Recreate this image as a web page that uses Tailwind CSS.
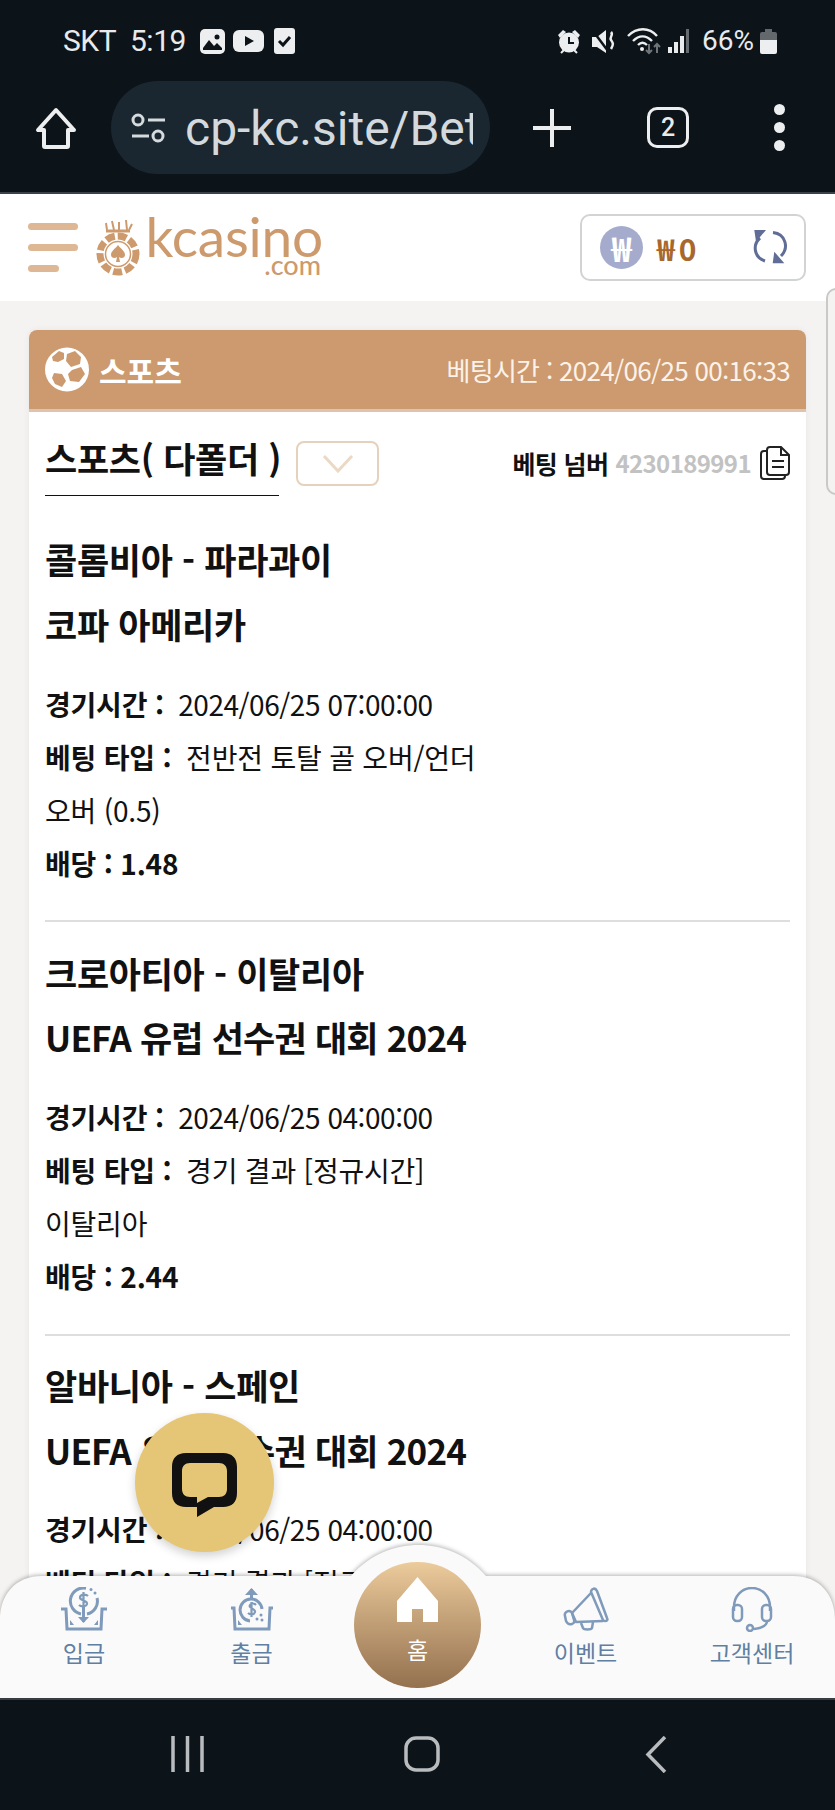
<!DOCTYPE html>
<html lang="ko">
<head>
<meta charset="utf-8">
<script src="https://cdn.jsdelivr.net/npm/@tailwindcss/browser@4"></script>
</head>
<body class="bg-[#0c1319]">
<div class="relative w-[835px] h-[1810px] overflow-hidden flex flex-col font-['Noto_Sans_CJK_KR',sans-serif] text-[#111]">

  <!-- phone status + browser bar -->
  <div class="h-[194px] shrink-0 bg-[#0c1319] border-b-2 border-[#3a4148] flex flex-col font-['Roboto',sans-serif] text-[#e8eaeb]">
    <div class="h-[81px] flex items-start pt-[23px] pl-[63px] pr-[58px]">
      <span class="text-[30px] leading-[36px] w-[67px] tracking-[-0.5px]">SKT</span>
      <span class="text-[30px] leading-[36px] w-[70px] tracking-[-0.5px]">5:19</span>
      <div class="flex items-center gap-[8px] h-[36px]">
        <svg width="25" height="25" viewBox="0 0 25 25"><rect width="25" height="25" rx="5" fill="#eceeef"/><circle cx="17" cy="8" r="2.5" fill="#0c1319"/><path d="M3 19l6-8 5 6 3-3 5 5v2H3z" fill="#0c1319"/></svg>
        <svg width="31" height="22" viewBox="0 0 31 22"><rect width="31" height="22" rx="6" fill="#eceeef"/><path d="M12 6l9 5-9 5z" fill="#0c1319"/></svg>
        <svg width="21" height="26" viewBox="0 0 21 26" class="ml-[2px]"><rect width="21" height="26" rx="3" fill="#eceeef"/><path d="M5 13l4 4 7-8" fill="none" stroke="#0c1319" stroke-width="3"/></svg>
      </div>
      <div class="ml-auto flex items-center h-[36px]">
        <svg width="24" height="25" viewBox="0 0 24 25" fill="#eceeef"><circle cx="12" cy="13.5" r="10"/><path d="M1 6l5-5 3 2-6 6zM23 6l-5-5-3 2 6 6z"/><path d="M12 8v6h5" fill="none" stroke="#0c1319" stroke-width="2"/><path d="M4 24l3-3M20 24l-3-3" stroke="#eceeef" stroke-width="2"/></svg>
        <svg width="24" height="25" viewBox="0 0 24 25" class="ml-[11px]" fill="#eceeef"><path d="M0 8h5l9-7v23l-9-6H0z"/><path d="M1 2l15 20" stroke="#0c1319" stroke-width="2.5"/><path d="M19 3c3 3-2 5 0 8s3 4 0 9" fill="none" stroke="#eceeef" stroke-width="2.5"/></svg>
        <svg width="35" height="28" viewBox="0 0 35 28" class="ml-[11px]" fill="none"><path d="M1 9c9-9 21-9 29 0M6 14c6-6 13-6 19 0M11 18c3-3 6-3 9 0" stroke="#eceeef" stroke-width="2.4"/><circle cx="15" cy="22" r="2" fill="#eceeef"/><path d="M22 17v9M19 23l3 3 3-3M30 26v-9M27 20l3-3 3 3" stroke="#6f7478" stroke-width="2"/></svg>
        <svg width="22" height="25" viewBox="0 0 22 25" class="ml-[6px]"><rect x="0" y="18" width="4" height="6" fill="#e8eaeb"/><rect x="6" y="13" width="4" height="11" fill="#e8eaeb"/><rect x="12" y="7" width="4" height="17" fill="#e8eaeb"/><rect x="18" y="0" width="3" height="24" fill="#666b70"/></svg>
        <span class="text-[28px] leading-[36px] ml-[12px]">66%</span>
        <svg width="17" height="25" viewBox="0 0 17 25" class="ml-[6px]"><path d="M5 0h7v3h3a2 2 0 0 1 2 2v6H0V5a2 2 0 0 1 2-2h3z" fill="#63686c"/><path d="M0 11h17v12a2 2 0 0 1-2 2H2a2 2 0 0 1-2-2z" fill="#eceeef"/></svg>
      </div>
    </div>
    <div class="flex items-center h-[93px] pl-[35px]">
      <svg width="42" height="42" viewBox="0 0 42 42" fill="none" stroke="#eceeef" stroke-width="4" stroke-linejoin="round"><path d="M21 3L3 23h6v16a1 1 0 0 0 1 1h22a1 1 0 0 0 1-1V23h6z"/></svg>
      <div class="ml-[34px] w-[379px] h-[93px] rounded-full bg-[#1a2730] flex items-center pl-[20px] pr-[17px]">
        <svg width="35" height="30" viewBox="0 0 35 30" fill="none" stroke="#d5dadd" stroke-width="3" class="shrink-0"><circle cx="7" cy="7" r="5"/><path d="M17 7h17M1 23h17"/><circle cx="27" cy="23" r="5"/></svg>
        <div class="ml-[19px] overflow-hidden whitespace-nowrap text-[48px] leading-[56px] text-[#d3d9dc] pt-[3px]">cp-kc.site/Bet</div>
      </div>
      <svg width="38" height="38" viewBox="0 0 38 38" class="ml-[43px]" stroke="#eceeef" stroke-width="4"><path d="M19 0v38M0 19h38"/></svg>
      <div class="ml-[76px] w-[42px] h-[41px] rounded-[10px] border-[3.5px] border-[#eceeef] flex items-center justify-center text-[25px] font-medium leading-none">2</div>
      <div class="ml-[85px] flex flex-col gap-[7px]">
        <div class="w-[11px] h-[11px] rounded-full bg-[#eceeef]"></div>
        <div class="w-[11px] h-[11px] rounded-full bg-[#eceeef]"></div>
        <div class="w-[11px] h-[11px] rounded-full bg-[#eceeef]"></div>
      </div>
    </div>
  </div>

  <!-- site header -->
  <div class="h-[107px] shrink-0 bg-white flex items-center pl-[28px] pr-[29px]">
    <div class="flex flex-col gap-[14px] w-[50px]">
      <div class="h-[7px] w-[50px] rounded-full bg-[#deb794]"></div>
      <div class="h-[7px] w-[50px] rounded-full bg-[#deb794]"></div>
      <div class="h-[7px] w-[31px] rounded-full bg-[#deb794]"></div>
    </div>
    <svg width="46" height="56" viewBox="0 0 46 56" class="ml-[17px]">
      <path d="M11 3l1 7M17 1l2 9M24 2l0 8M31 0l1 10M37 4l-3 6" stroke="#cd9a6d" stroke-width="2" fill="none"/>
      <path d="M11 11h24" stroke="#cd9a6d" stroke-width="3"/>
      <circle cx="23" cy="34" r="18" fill="none" stroke="#cd9a6d" stroke-width="7" stroke-dasharray="9 3"/>
      <circle cx="23" cy="34" r="12.5" fill="#fff" stroke="#cd9a6d" stroke-width="1.5"/>
      <path d="M23 25c3 4 7 6 7 10 0 3-4 4-6 2l1 5h-4l1-5c-2 2-6 1-6-2 0-4 4-6 7-10z" fill="#cd9a6d"/>
    </svg>
    <div class="ml-[11px] w-[169px] -mt-[3px] flex flex-col items-end font-['Lato',sans-serif] text-[#cd9a6d]">
      <span class="block text-[55px] h-[38px] leading-[34px] -mr-[2px] tracking-[-0.2px] font-normal">kcasino</span>
      <span class="block text-[27px] h-[16px] leading-[16px] font-medium">.com</span>
    </div>
    <div class="ml-auto w-[226px] h-[67px] rounded-[10px] border-[2.5px] border-[#d2d3d3] flex items-center pl-[18px]">
      <div class="w-[43px] h-[43px] rounded-full bg-[#a5abcc] flex items-center justify-center text-white text-[34px] font-bold leading-none">₩</div>
      <span class="ml-[14px] w-[74px] text-[30px] font-bold text-[#a8682d] leading-none tracking-[4px]">₩0</span>
      <svg width="35" height="35" viewBox="0 0 35 35" class="ml-[22px]"><path d="M7 8C0 14 0 27 12 31M20 2.500C33 4 36 18 28 26" fill="none" stroke="#5f6d97" stroke-width="3"/><path d="M1.300 0H13L3 11.700zM31.300 33.300H19.700L21.300 21.700z" fill="#5f6d97"/></svg>
    </div>
  </div>

  <!-- content -->
  <div class="flex-1 min-h-0 overflow-hidden bg-[#f4f3f1] pt-[29px] px-[29px]">
    <div class="bg-white rounded-t-[8px] shadow-[0_0_6px_rgba(0,0,0,0.06)]">
      <div class="h-[82px] rounded-t-[8px] bg-[#cc9a6e] border-b-[3px] border-[#dcc4ae] flex items-center px-[16px] text-white">
        <svg width="44" height="45" viewBox="0 0 44 45">
          <circle cx="22" cy="22.500" r="22" fill="#fff"/>
          <path d="M22 7l8-3 6 6-1 7-9 3-5-6zM27 23l9-3 4 7-6 8-9-1-2-7zM9 26l8 1 4 7-4 6-7-3-3-6zM7 10l7-6 5 2v6l-6 3-5-1z" fill="#cc9a6e"/>
        </svg>
        <span class="ml-[10px] text-[30px] font-bold leading-none">스포츠</span>
        <span class="ml-auto text-[26px] leading-none tracking-[-0.7px] text-[#fbf2ea]">베팅시간 : 2024/06/25 00:16:33</span>
      </div>
      <div class="px-[16px]">
        <div class="flex items-start h-[84px]">
          <div class="w-[234px] h-[84px] border-b-[1.5px] border-[#111] whitespace-nowrap text-[35px] font-bold leading-[92px] tracking-[-0.3px]">스포츠( 다폴더 )</div>
          <div class="ml-[17px] mt-[29px] w-[83px] h-[45px] rounded-[8px] border-[2px] border-[#e6d2bc] flex items-center justify-center">
            <svg width="32" height="19" viewBox="0 0 32 19" fill="none" stroke="#ecd9c5" stroke-width="3"><path d="M2 2l14 15L30 2"/></svg>
          </div>
          <div class="ml-auto mt-[34px] flex items-center h-[34px]">
            <span class="text-[25px] font-bold tracking-[-0.6px] leading-none">베팅 넘버</span>
            <span class="ml-[7px] text-[24px] font-bold text-[#c2c2c2] tracking-[-0.6px] leading-none">4230189991</span>
            <svg width="30" height="34" viewBox="0 0 30 34" fill="none" stroke="#222" stroke-width="2" class="ml-[9px]"><path d="M7 5H4a3 3 0 0 0-3 3v22a3 3 0 0 0 3 3h18a3 3 0 0 0 3-3v-1"/><path d="M7 4a3 3 0 0 1 3-3h11l8 8v17a3 3 0 0 1-3 3H10a3 3 0 0 1-3-3z"/><path d="M21 1v8h8M12 15h12M12 21h12"/></svg>
          </div>
        </div>

        <div class="pt-[30px] pb-[30px] border-b-[2px] border-[#dedede]">
          <div class="text-[35px] font-bold leading-[65px] tracking-[-0.3px]">콜롬비아 - 파라과이</div>
          <div class="text-[35px] font-bold leading-[65px] tracking-[-0.3px]">코파 아메리카</div>
          <div class="mt-[22px] text-[28px] leading-[53px] tracking-[-0.2px]"><b>경기시간 :</b><span class="ml-[7px] tracking-[-0.45px]"> 2024/06/25 07:00:00</span></div>
          <div class="text-[28px] leading-[53px] tracking-[-0.2px]"><b>베팅 타입 :</b><span class="ml-[7px]"> 전반전 토탈 골 오버/언더</span></div>
          <div class="text-[28px] leading-[53px] tracking-[-0.2px]">오버 (0.5)</div>
          <div class="text-[28px] leading-[53px] tracking-[-0.2px] font-bold">배당 : 1.48</div>
        </div>

        <div class="pt-[20px] pb-[31px] border-b-[2px] border-[#dedede]">
          <div class="text-[35px] font-bold leading-[62px] tracking-[-0.3px]">크로아티아 - 이탈리아</div>
          <div class="text-[35px] font-bold leading-[65px] tracking-[-0.8px]">UEFA 유럽 선수권 대회 2024</div>
          <div class="mt-[22px] text-[28px] leading-[53px] tracking-[-0.2px]"><b>경기시간 :</b><span class="ml-[7px] tracking-[-0.45px]"> 2024/06/25 04:00:00</span></div>
          <div class="text-[28px] leading-[53px] tracking-[-0.2px]"><b>베팅 타입 :</b><span class="ml-[7px]"> 경기 결과 [정규시간]</span></div>
          <div class="text-[28px] leading-[53px] tracking-[-0.2px]">이탈리아</div>
          <div class="text-[28px] leading-[53px] tracking-[-0.2px] font-bold">배당 : 2.44</div>
        </div>

        <div class="pt-[16px]">
          <div class="text-[35px] font-bold leading-[65px] tracking-[-0.3px]">알바니아 - 스페인</div>
          <div class="text-[35px] font-bold leading-[65px] tracking-[-0.8px]">UEFA 유럽 선수권 대회 2024</div>
          <div class="mt-[21px] text-[28px] leading-[53px] tracking-[-0.2px]"><b>경기시간 :</b><span class="ml-[7px] tracking-[-0.45px]"> 2024/06/25 04:00:00</span></div>
          <div class="text-[28px] leading-[53px] tracking-[-0.2px]"><b>베팅 타입 :</b><span class="ml-[7px]"> 경기 결과 [정규시간]</span></div>
        </div>
      </div>
    </div>
  </div>

  <!-- android nav -->
  <div class="h-[112px] shrink-0 bg-[#0c1319] border-t-[2px] border-[#3a4148] flex items-center pb-[2px] pl-[171px]">
    <svg width="33" height="36" viewBox="0 0 33 36" stroke="#b9bcbe" stroke-width="3.500"><path d="M2 0v36M16.500 0v36M31 0v36"/></svg>
    <svg width="36" height="36" viewBox="0 0 36 36" fill="none" stroke="#b9bcbe" stroke-width="3.500" class="ml-[200px]"><rect x="2" y="2" width="32" height="32" rx="10"/></svg>
    <svg width="22" height="37" viewBox="0 0 22 37" fill="none" stroke="#b9bcbe" stroke-width="3.500" class="ml-[205px]"><path d="M20 1L3 18.500 20 36"/></svg>
  </div>

  <!-- scroll handle -->
  <div class="absolute left-[826px] top-[288px] w-[20px] h-[207px] rounded-[10px] border-[2px] border-[#c9c9c9] bg-[#f4f3f1]"></div>

  <!-- chat button -->
  <div class="absolute left-[135px] top-[1413px] w-[139px] h-[139px] rounded-full bg-[#e5c576] shadow-[0_4px_10px_rgba(0,0,0,0.18)] flex items-center justify-center pt-[5px]">
    <svg width="65" height="64" viewBox="0 0 65 64" fill="#111"><path d="M14 0H51C60 0 65 5 65 14V40C65 49 60 54 51 54H42L25 64V54H14C5 54 0 49 0 40V14C0 5 5 0 14 0ZM18 10C13 10 10 13 10 18V36C10 41 13 44 18 44H25V50L36 44H47C52 44 55 41 55 36V18C55 13 52 10 47 10Z" fill-rule="evenodd"/></svg>
  </div>

  <!-- bottom nav -->
  <div class="absolute left-0 top-[1545px] w-[835px] h-[153px]">
    <svg width="835" height="153" viewBox="0 0 835 153" class="absolute inset-0 drop-shadow-[0_-1px_2px_rgba(0,0,0,0.3)]"><path d="M0 153V75C0 50 15 31 42 31H351C370 9 395 0 418.500 0S467 9 486 31H793C820 31 835 50 835 75V153z" fill="#fafafa"/></svg>
    <div class="absolute left-0 right-0 bottom-0 h-[122px] grid grid-cols-[168px_167px_167px_167px_166px] text-[23px] text-[#5f7fa3] leading-none">
      <div class="flex flex-col items-center pt-[11px]">
        <svg width="46" height="45" viewBox="0 0 46 45" fill="none" stroke="#7f9aba" stroke-width="3"><path d="M20 27A13 13 0 0 1 25 1.200M36 11A13 13 0 0 1 26 27"/><path d="M27 9c-2-2-7-2-8 1-1 4 8 3 7 7-1 3-6 3-8 1M22.500 5v16" stroke-width="2.200"/><path d="M22.500 20v15"/><path d="M17 30h11l-5.500 6z" fill="#7f9aba" stroke="none"/><path d="M0 22h5l1 20h34l1-20h5"/><path d="M9 33v5h4zM37 33v5h-4z" fill="#7f9aba" stroke="none"/><circle cx="30" cy="2.500" r="1.500" fill="#7f9aba" stroke="none"/><circle cx="34" cy="6" r="1.500" fill="#7f9aba" stroke="none"/></svg>
        <span class="mt-[9px]">입금</span>
      </div>
      <div class="flex flex-col items-center pt-[11px]">
        <svg width="44" height="45" viewBox="0 0 44 45" fill="none" stroke="#7f9aba" stroke-width="3"><path d="M21.500 13V2"/><path d="M15 8h13l-6.500-7z" fill="#7f9aba" stroke="none"/><path d="M32 22A11 11 0 1 0 20 34M30 12" /><path d="M26 18c-2-2-5-2-6 0-2 3 6 4 5 7-1 3-5 3-7 1M21.500 15v15" stroke-width="2.200"/><path d="M1 21h3l1 21h34l1-21h3"/><path d="M8 33v5h4z" fill="#7f9aba" stroke="none"/><circle cx="31" cy="28" r="1.500" fill="#7f9aba" stroke="none"/><circle cx="27" cy="32" r="1.500" fill="#7f9aba" stroke="none"/><circle cx="32" cy="33" r="1.500" fill="#7f9aba" stroke="none"/></svg>
        <span class="mt-[9px]">출금</span>
      </div>
      <div class="relative">
        <div class="absolute left-[19px] top-[-14px] w-[127px] h-[126px] rounded-full bg-linear-to-b from-[#eccb9c] to-[#94714f] flex flex-col items-center text-white text-[23px] pt-[15px]">
          <svg width="41" height="45" viewBox="0 0 41 45" fill="#fff"><path d="M20.500 0L41 24v21H26V32H15v13H0V24z"/></svg>
          <span class="mt-[16px]">홈</span>
        </div>
      </div>
      <div class="flex flex-col items-center pt-[11px]">
        <svg width="46" height="45" viewBox="0 0 46 45" fill="none" stroke="#7f9aba" stroke-width="2.500" stroke-linejoin="round"><path d="M30 2c2-1 3 0 4 2l10 27c1 2 0 3-2 3-1 0-2 0-2-1L28 5c0-1 1-3 2-3z"/><path d="M28 6L9 26l4 9 27-1"/><path d="M6 24c-2 0-5 2-4 5l1 5c1 2 3 4 6 3 2-1 3-2 2-4l-2-7c0-1-2-2-3-2z"/><path d="M18 36l2 5c1 2 8 2 9 0l1-6"/></svg>
        <span class="mt-[9px]">이벤트</span>
      </div>
      <div class="flex flex-col items-center pt-[11px]">
        <svg width="42" height="45" viewBox="0 0 42 45" fill="none" stroke="#7f9aba" stroke-width="2.500"><path d="M3 24v-4C3 9 11 1 21 1s18 8 18 19v4"/><rect x="2" y="18" width="9" height="16" rx="4"/><rect x="31" y="18" width="9" height="16" rx="4"/><path d="M36 34c0 5-5 7-13 8"/><circle cx="19" cy="41" r="3"/></svg>
        <span class="mt-[9px]">고객센터</span>
      </div>
    </div>
  </div>
</div>
</body>
</html>
